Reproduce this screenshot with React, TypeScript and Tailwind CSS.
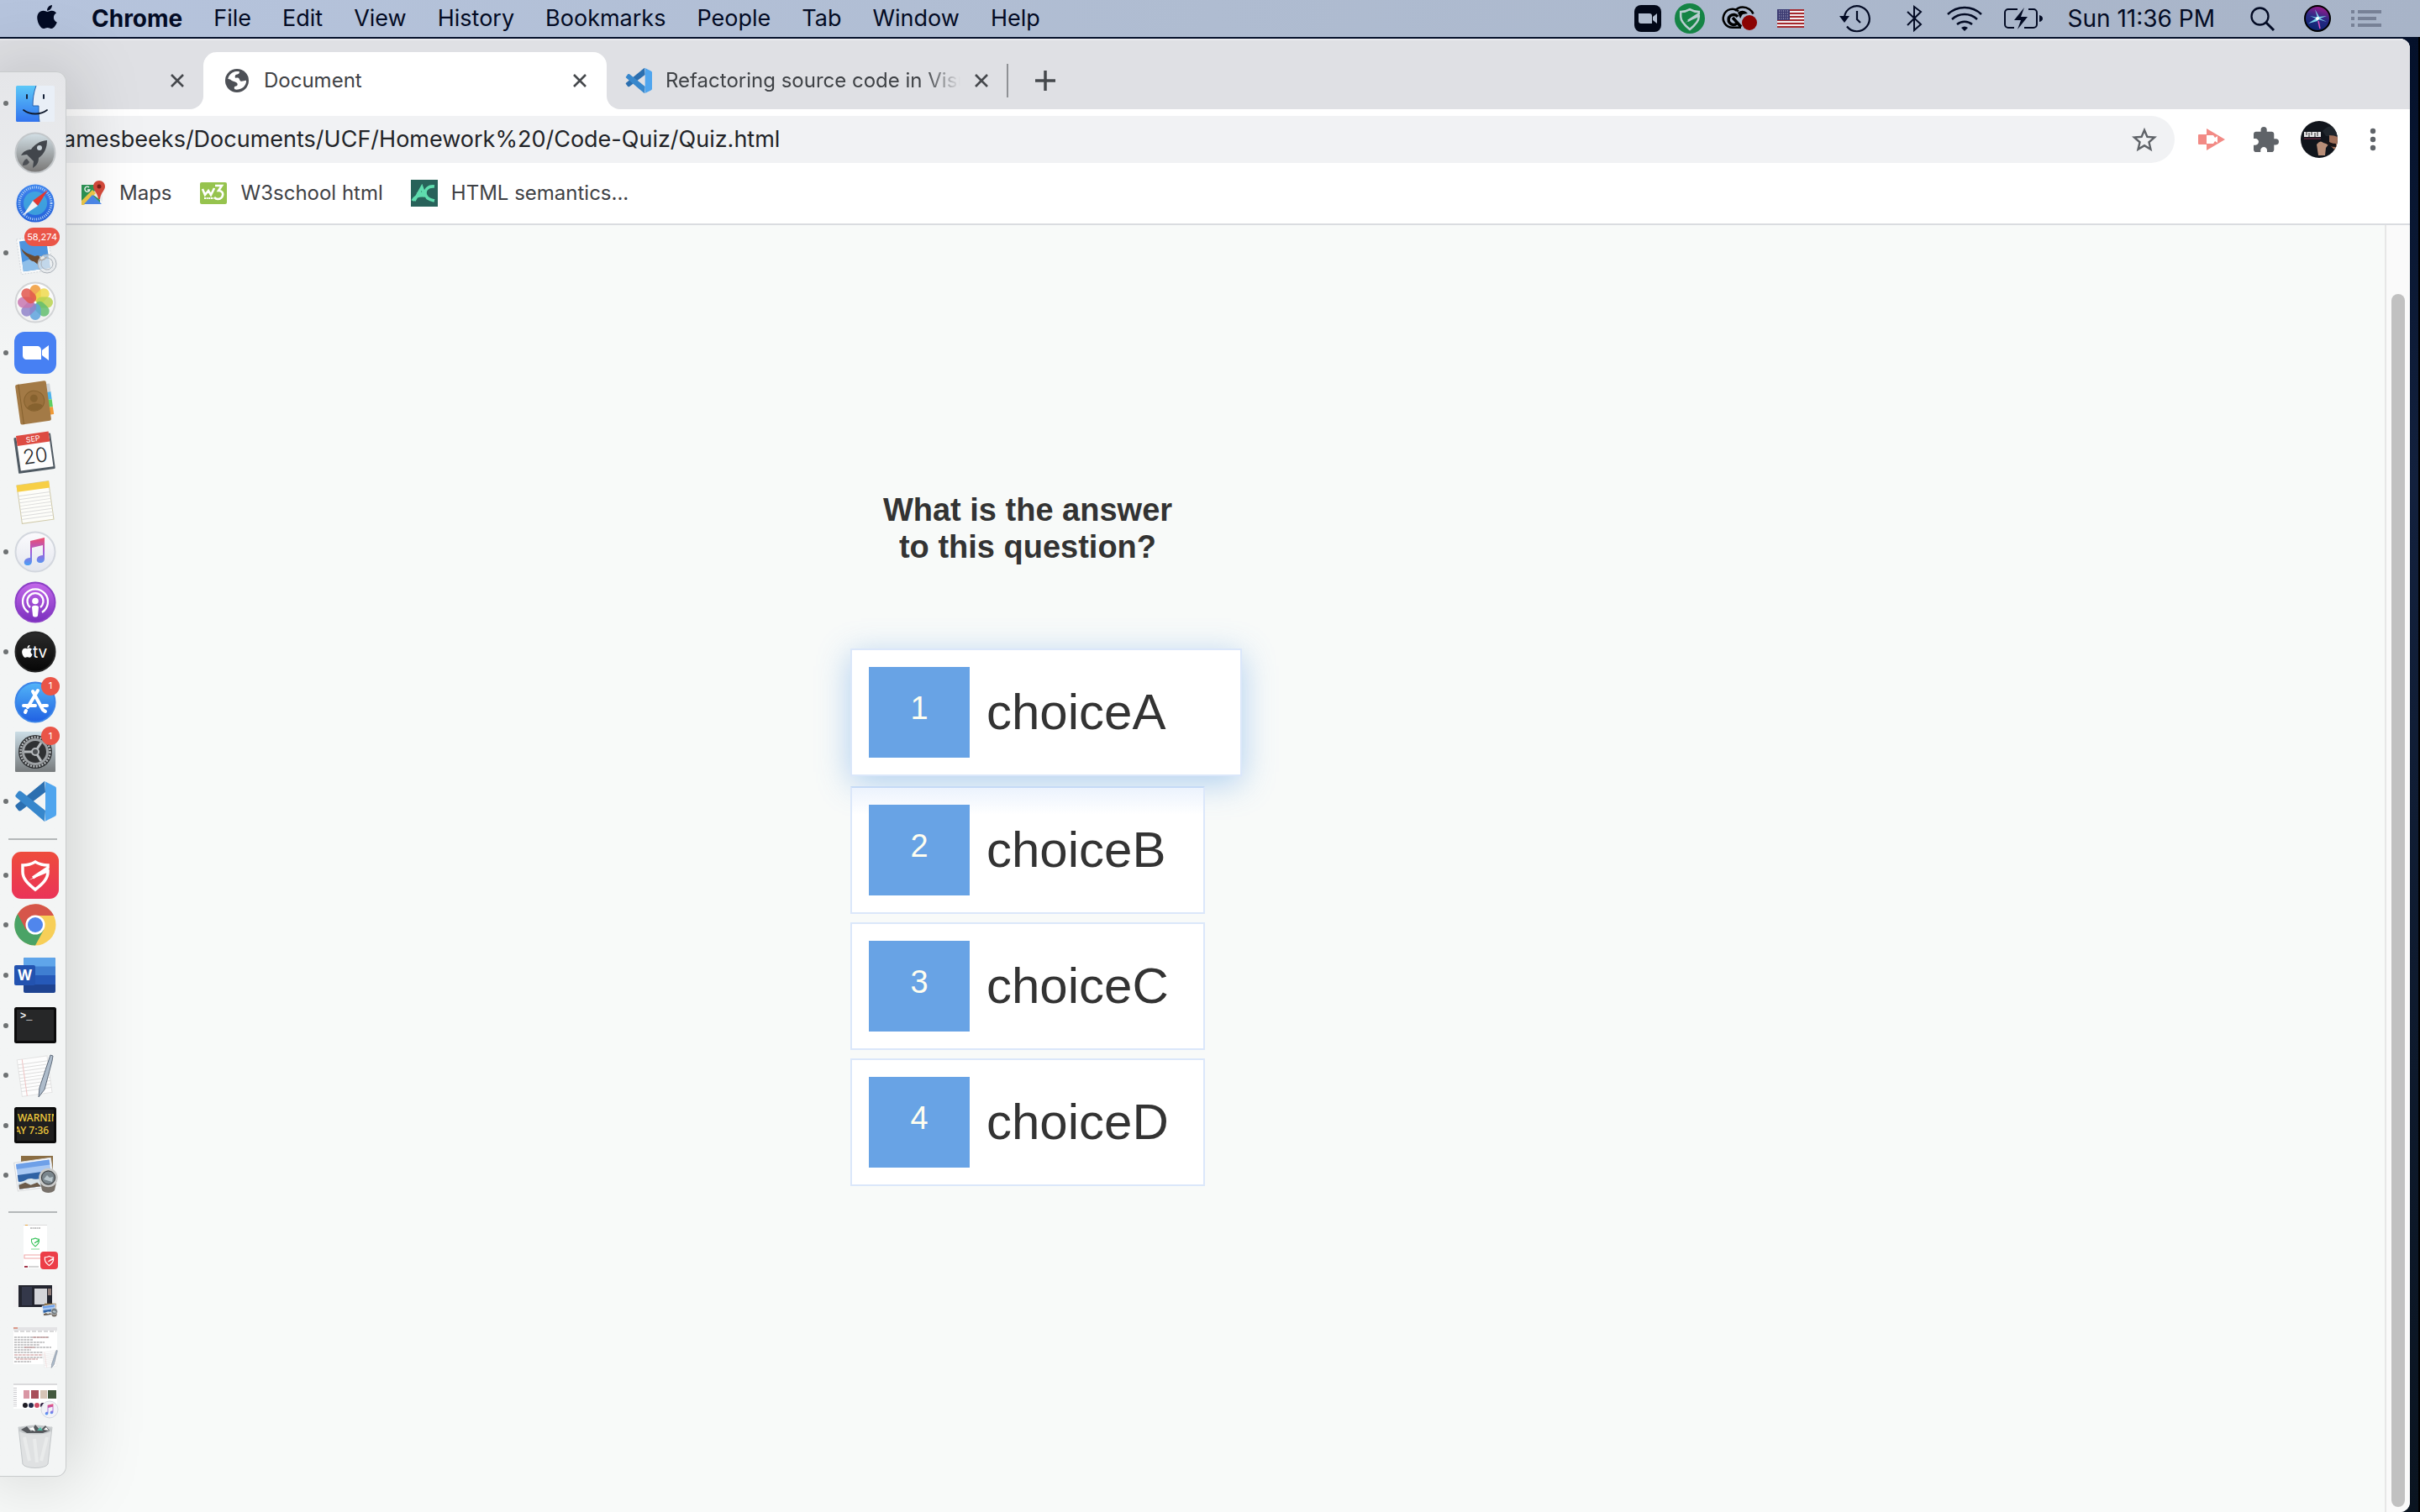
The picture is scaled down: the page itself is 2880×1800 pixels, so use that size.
import React from "react";
import { FaApple } from "react-icons/fa";

type Kids = { children?: React.ReactNode };

/* ---------- shared drawings ---------- */

function Svg({ w, h, vb, children }: Kids & { w: number; h: number; vb: string }) {
  return (
    <svg width={w} height={h} viewBox={vb} fill="none" aria-hidden="true" className="block shrink-0 overflow-visible">
      {children}
    </svg>
  );
}

const APPLE =
  "M318.7 268.7c-.2-36.7 16.4-64.4 50-84.8-18.8-26.9-47.2-41.7-84.7-44.6-35.5-2.8-74.3 20.7-88.5 20.7-15 0-49.4-19.7-76.4-19.7C63.3 141.2 4 184.8 4 273.5q0 39.300 14.400 81.200c12.800 36.700 59 126.700 107.200 125.200 25.200-.6 43-17.900 75.800-17.900 31.800 0 48.300 17.900 76.400 17.900 48.600-.7 90.400-82.500 102.600-119.300-65.200-30.700-61.700-90-61.700-91.900zm-56.600-164.200c27.300-32.400 24.800-61.900 24-72.500-24.100 1.400-52 16.400-67.900 34.900-17.500 19.800-27.800 44.300-25.600 71.900 26.100 2 49.900-11.400 69.500-34.300z";

function VsCodeMark({ size }: { size: number }) {
  return (
    <Svg w={size} h={size} vb="0 0 50 50">
      <path d="M36 1 2 29a2 2 0 0 0 0 3l3 4a3 3 0 0 0 3 0L37 14z" fill="#2b6fb0" />
      <path d="M36 49 2 20a2 2 0 0 1 0-3l3-4a3 3 0 0 1 3 0l29 23z" fill="#3787cc" />
      <path d="M36 1 48 7a3 3 0 0 1 2 3v30a3 3 0 0 1-2 3L36 49c1-1 1-2 1-3V4c0-1 0-2-1-3z" fill="#4fa5ee" />
    </Svg>
  );
}

function ShieldLines({ color }: { color: string }) {
  return (
    <>
      <path d="M40 19v3c0 8-6 14-15 21C16 36 10 30 10 22v-8c6 0 10-1 15-4 5 3 9 4 15 4v3L22 29" stroke={color} strokeWidth="3.500" />
      <path d="M17 32 41 18l-2 5z" fill={color} />
    </>
  );
}

function NoteGlyph() {
  return (
    <>
      <defs>
        <linearGradient id="note" x1="0" y1="0" x2="0" y2="1">
          <stop offset="0" stopColor="#ee4f6c" />
          <stop offset="0.5" stopColor="#a65ad8" />
          <stop offset="1" stopColor="#4aa0f5" />
        </linearGradient>
      </defs>
      <path
        d="M19 12 36 8v25c0 3-2 5-5 5s-5-2-4-5 4-4 7-4V17l-13 3v16c0 3-2 5-5 5s-5-2-4-5 4-4 7-4z"
        fill="url(#note)"
      />
    </>
  );
}

function CloseMark() {
  return (
    <Svg w={18} h={18} vb="0 0 18 18">
      <path d="M2 2 16 16M16 2 2 16" stroke="#45484c" strokeWidth="2.600" />
    </Svg>
  );
}

/* ---------- menu bar ---------- */

const MENUS = ["File", "Edit", "View", "History", "Bookmarks", "People", "Tab", "Window", "Help"];
const INK = "#030b24";

function MenuBar() {
  return (
    <header className="flex h-11 shrink-0 items-center bg-linear-to-r from-[#b6c4dd] via-[#afbcd1] to-[#a8b4c8] text-[27px] leading-8 text-[#030b24]">
      <nav aria-label="Menu" className="flex items-center gap-[37px] pl-10">
        <button aria-label="Apple menu" className="-mt-1">
          <FaApple size={32} color={INK} />
        </button>
        <button className="text-[28px] font-bold">Chrome</button>
        {MENUS.map((m) => (
          <button key={m}>{m}</button>
        ))}
      </nav>
      <div className="ml-auto flex items-center pr-[46px]">
        <button aria-label="Zoom">
          <Svg w={32} h={32} vb="0 0 32 32">
            <rect width="32" height="32" rx="8" fill="#020818" />
            <path d="M5 10h13c2 0 3 1 3 3v9H8c-2 0-3-1-3-3zM22 14l5-4v12l-5-4z" fill="#b0bccf" />
          </Svg>
        </button>
        <button aria-label="VPN" className="ml-4">
          <Svg w={36} h={36} vb="0 0 50 50">
            <circle cx="25" cy="25" r="25" fill="#158445" />
            <ShieldLines color="#b9cdd0" />
          </Svg>
        </button>
        <button aria-label="Creative Cloud" className="ml-[21px]">
          <Svg w={42} h={30} vb="0 0 42 30">
            <path d="M15 6C17 3 20 1.500 24 1.500c6 0 11 4 12.500 8" stroke="#000" strokeWidth="2.500" />
            <path d="M22 25.800H12A11 11 0 1 1 19 6.500" stroke="#000" strokeWidth="2.500" />
            <path d="M18 13a6 6 0 1 0-1 8M12 14l10 11" stroke="#000" strokeWidth="3.500" />
            <path d="M18 8c4-3 8-3 12 1l-6 1c-2 2-2 4-3 5z" fill="#000" />
            <circle cx="32" cy="20" r="9" fill="#8b0303" />
          </Svg>
        </button>
        <button aria-label="Input source: U.S." className="ml-[23px]">
          <Svg w={32} h={22} vb="0 0 32 22">
            <rect width="32" height="22" fill="#f3eef0" />
            {[0, 4, 8, 12, 16, 20].map((y) => (
              <rect key={y} y={y} width="32" height="2" fill="#a5282d" />
            ))}
            <rect width="15" height="13" fill="#3c3b72" />
            {[2, 5, 8, 11].map((y) => (
              <path key={y} d={`M2 ${y}h12`} stroke="#c5c6dc" strokeDasharray="1 1.500" />
            ))}
          </Svg>
        </button>
        <button aria-label="Time Machine" className="ml-[42px]">
          <Svg w={37} h={32} vb="0 0 37 32">
            <path d="M6 14A15 15 0 1 1 9 25.500" stroke={INK} strokeWidth="2.200" />
            <path d="M0 13h12L6 21z" fill={INK} />
            <path d="M21 7v10l4 4" stroke={INK} strokeWidth="2.200" />
          </Svg>
        </button>
        <button aria-label="Bluetooth" className="ml-[43px]">
          <Svg w={18} h={32} vb="0 0 18 32">
            <path d="M1 8 17 23 9 30V2l8 6L1 24" stroke={INK} strokeWidth="2" />
          </Svg>
        </button>
        <button aria-label="Wi-Fi" className="ml-[30px]">
          <Svg w={42} h={30} vb="0 0 42 30">
            <path d="M1 10a29 29 0 0 1 40 0M6 16a22 22 0 0 1 30 0M12 22a14 14 0 0 1 18 0" stroke={INK} strokeWidth="2.500" />
            <path d="M17 26q4-3 8 0l-4 4z" fill={INK} />
          </Svg>
        </button>
        <button aria-label="Battery charging" className="ml-[26px]">
          <Svg w={46} h={26} vb="0 0 46 26">
            <path d="M16 2H5a4 4 0 0 0-4 4v14a4 4 0 0 0 4 4h7M29 2h6a4 4 0 0 1 4 4v14a4 4 0 0 1-4 4H24" stroke={INK} strokeWidth="2" />
            <path d="M24 0 12 15h8l-4 11 12-15h-8zM42 9q4 1 4 4t-4 4z" fill={INK} />
          </Svg>
        </button>
        <time className="ml-[30px] text-[28px]">Sun 11:36 PM</time>
        <button aria-label="Spotlight" className="ml-[42px]">
          <Svg w={29} h={29} vb="0 0 29 29">
            <circle cx="11.500" cy="11.500" r="10" stroke={INK} strokeWidth="2.300" />
            <path d="M18.500 18.500 28 28" stroke={INK} strokeWidth="3" />
          </Svg>
        </button>
        <button aria-label="Siri" className="ml-[35px]">
          <Svg w={32} h={32} vb="0 0 32 32">
            <defs>
              <linearGradient id="siri" x1="0.600" y1="0" x2="0.300" y2="1">
                <stop offset="0" stopColor="#a0188c" />
                <stop offset="0.450" stopColor="#2a2a86" />
                <stop offset="1" stopColor="#07246e" />
              </linearGradient>
            </defs>
            <circle cx="16" cy="16" r="15" fill="url(#siri)" stroke="#000" strokeWidth="2" />
            <path d="M16 15 13 5l5 9 9-1-8 3 8 4-10-3-1 2-11 3 9-6-7-3z" fill="#7fd8ee" />
            <circle cx="16" cy="16" r="2" fill="#fff" />
            <path d="m17 19 2 9" stroke="#e056c0" strokeWidth="1.500" />
          </Svg>
        </button>
        <button aria-label="Notification Center" className="ml-6">
          <Svg w={36} h={20} vb="0 0 36 20">
            <path d="M0 2h4M8 2h28M0 10h4M8 10h22M0 18h4M8 18h28" stroke="#778196" strokeWidth="4" />
          </Svg>
        </button>
      </div>
    </header>
  );
}

/* ---------- browser chrome ---------- */

function TabStrip() {
  return (
    <div role="tablist" className="flex h-[84px] shrink-0 bg-white text-[24px] text-[#3f4246]">
      <div className="flex w-[242px] items-center justify-end rounded-br-[16px] border-t-2 border-[#ececef] bg-[#dfe0e4] pt-3.5 pr-[22px]">
        <button aria-label="Close tab">
          <CloseMark />
        </button>
      </div>
      <div className="flex w-[480px] border-t-2 border-[#ececef] bg-[#dfe0e4] pt-3.5">
        <div role="tab" aria-selected="true" className="flex flex-1 items-center rounded-t-[16px] bg-white pr-[23px] pl-[26px]">
          <Svg w={28} h={28} vb="2 2 20 20">
            <circle cx="12" cy="12" r="10" fill="#4d5056" />
            <path
              d="M4.400 10.600C4.700 8.500 6.500 5.500 10.100 4.400c1.200-.3 2.600-.4 3.700-.2.500.8.200 1.700-.6 2.100-.9.500-2.400.3-2.600 1.200-.3.900-.5 1.900.2 2.100.8.100 1.900-.2 2.600.2.900.6.800 2.300 1.900 2.700 1.400.4 2.700-.4 4.500-.6.200 1.200-.1 2.600-.9 3.800-.8 1.300-1.800 2.300-3.100 2.900-1.600.8-3.900 1.300-5.700.8-.5-.7-.6-1.800 0-2.400.6-.5 1.700-.2 2.100-.9.400-.6.300-1.300 0-1.800-.5-.8-1.300-1-2.100-1.400-.8-.3-1.700-.5-2.400-.9-.9-.4-1.300-1.300-3.300-1.400z"
              fill="#fff"
            />
          </Svg>
          <span className="ml-[18px]">Document</span>
          <button aria-label="Close tab" className="ml-auto">
            <CloseMark />
          </button>
        </div>
      </div>
      <div className="flex flex-1 items-center rounded-bl-[16px] border-t-2 border-[#ececef] bg-[#dfe0e4] pt-3.5 pl-[22px]">
        <div role="tab" aria-selected="false" className="flex w-[433px] items-center">
          <VsCodeMark size={32} />
          <span className="ml-4 min-w-0 flex-1 overflow-hidden [mask-image:linear-gradient(to_right,#000_88%,transparent)] whitespace-nowrap">
            Refactoring source code in Visu
          </span>
          <button aria-label="Close tab" className="ml-4">
            <CloseMark />
          </button>
        </div>
        <span className="ml-[21px] h-10 w-0.5 bg-[#8f9195]" />
        <button aria-label="New tab" className="ml-8">
          <Svg w={24} h={24} vb="0 0 24 24">
            <path d="M12 0v24M0 12h24" stroke="#45484c" strokeWidth="3.500" />
          </Svg>
        </button>
      </div>
    </div>
  );
}

function Toolbar() {
  return (
    <div className="flex h-[72px] shrink-0 items-center bg-white pr-10">
      <div className="flex h-14 flex-1 items-center rounded-r-full bg-[#f1f2f4] pr-[21px] pl-[75px]">
        <input
          aria-label="Address"
          defaultValue="amesbeeks/Documents/UCF/Homework%20/Code-Quiz/Quiz.html"
          className="min-w-0 flex-1 bg-transparent text-[27px] text-[#222428] outline-none"
        />
        <button aria-label="Bookmark this page">
          <Svg w={30} h={30} vb="2 1.500 20 20">
            <path
              d="m22 9.240-7.190-.62L12 2 9.190 8.630 2 9.240l5.460 4.730L5.820 21 12 17.270 18.180 21l-1.630-7.030L22 9.240zM12 15.400l-3.760 2.270 1-4.280-3.320-2.880 4.380-.38L12 6.100l1.710 4.040 4.380.38-3.320 2.880 1 4.280L12 15.400z"
              fill="#5f6368"
            />
          </Svg>
        </button>
      </div>
      <button aria-label="Screen recorder" className="ml-7">
        <Svg w={32} h={26} vb="0 0 32 26">
          <path d="M10 0 32 13 10 26v-7H1a1 1 0 0 1-1-1V8a1 1 0 0 1 1-1h9z" fill="#f28a85" />
          <path d="M10 8h8l2 3 3-2v8l-3-2-2 3h-8z" fill="#fff" />
        </Svg>
      </button>
      <button aria-label="Extensions" className="ml-[34px]">
        <Svg w={30} h={30} vb="2 1 21 21">
          <path
            d="M20.500 11H19V7c0-1.100-.9-2-2-2h-4V3.500a2.500 2.500 0 0 0-5 0V5H4c-1.100 0-1.990.9-1.990 2v3.800H3.500c1.490 0 2.700 1.210 2.700 2.700s-1.210 2.700-2.700 2.700H2V20c0 1.100.9 2 2 2h3.800v-1.500c0-1.490 1.210-2.700 2.700-2.700s2.700 1.210 2.700 2.700V22H17c1.100 0 2-.9 2-2v-4h1.500a2.500 2.500 0 0 0 0-5z"
            fill="#5f6368"
          />
        </Svg>
      </button>
      <button aria-label="Profile" className="ml-[26px]">
        <Svg w={44} h={44} vb="0 0 44 44">
          <defs>
            <clipPath id="face">
              <circle cx="22" cy="22" r="22" />
            </clipPath>
          </defs>
          <g clipPath="url(#face)">
            <rect width="44" height="44" fill="#11151c" />
            <path d="M26 12q8-10 18-2v8H30z" fill="#1f252c" />
            <path d="M34 17q6 0 10 2v13l-4 2-6-6z" fill="#a1705a" />
            <path d="M19 28q4-6 8-2l6 2-3 4-1 9h-8z" fill="#b88e78" />
            <path d="M30 22q5 5 12 5v4q-9 0-13-6z" fill="#1a1416" />
            <rect x="4" y="13" width="20" height="6" fill="#e8e8ea" />
            <path d="M7 13v4M10 14v5M13 13v4M17 14v5M20 13v5" stroke="#222" />
            <path d="M4 21h20" stroke="#7a2c46" />
          </g>
        </Svg>
      </button>
      <button aria-label="Chrome menu" className="ml-[38px]">
        <Svg w={8} h={28} vb="0 0 8 28">
          <circle cx="4" cy="4" r="3.200" fill="#5f6368" />
          <circle cx="4" cy="14" r="3.200" fill="#5f6368" />
          <circle cx="4" cy="24" r="3.200" fill="#5f6368" />
        </Svg>
      </button>
    </div>
  );
}

function BookmarksBar() {
  return (
    <nav
      aria-label="Bookmarks"
      className="flex h-[66px] shrink-0 items-center border-b-2 border-[#dadce0] bg-white pb-2 pl-24 text-[24px] text-[#3f4246]"
    >
      <a href="#maps" className="flex items-center gap-4">
        <Svg w={30} h={30} vb="0 0 30 30">
          <path d="M1 5h22v22H1z" fill="#2f9a58" />
          <path d="M1 28 22 7l4 4v14L15 17 4 29z" fill="#f2f3f5" />
          <path d="M1 24 14 11l4 4L4 29H1z" fill="#f6cf4b" />
          <path d="m14 17 11 11H4z" fill="#4f8cf0" />
          <path d="M22 0c4 0 7 3 7 7 0 5-5 7-6 15h-2C20 14 15 12 15 7c0-4 3-7 7-7z" fill="#d84b3c" />
          <circle cx="22" cy="7" r="2.500" fill="#7d2018" />
          <path d="M10 8a3 3 0 1 0 .8 3H8" stroke="#fff" strokeWidth="1.400" />
        </Svg>
        Maps
      </a>
      <a href="#w3" className="ml-[33px] flex items-center gap-[17px]">
        <Svg w={32} h={26} vb="0 0 32 26">
          <rect width="32" height="26" rx="2" fill="#96c34e" />
          <path d="m3 8 3 7 4-5 3 5 4-8M18 4h8l-4 6c8 0 6 10-1 10-2 0-3-1-4-2" stroke="#fff" strokeWidth="2.600" />
          <path d="M5 19h11" stroke="#fff" strokeWidth="2" strokeDasharray="2 .6" />
        </Svg>
        W3school html
      </a>
      <a href="#html" className="ml-[33px] flex items-center gap-4">
        <Svg w={32} h={32} vb="0 0 32 32">
          <rect width="32" height="32" fill="#28625a" />
          <path d="m4 25 9-16 3 8M7 17l7-1M28 8c-8-1-13 5-10 11 2 5 6 5 10 6M2 25c3-6 8-7 15-6" stroke="#5fdcae" strokeWidth="3.500" />
        </Svg>
        HTML semantics...
      </a>
    </nav>
  );
}

/* ---------- quiz page ---------- */

const BASE = "flex items-center border-2 p-5 text-left";
const CHOICES = [
  { n: 1, label: "choiceA", cls: "mb-3 w-[466px] border-[#dbe7fa] bg-white shadow-[0_8px_36px_rgba(86,155,228,0.45)]" },
  {
    n: 2,
    label: "choiceB",
    cls: "relative mb-2.5 w-[422px] border-[#dbe7fa] border-t-[#c5daf6] bg-linear-to-b from-[#ecf3fd] to-white to-[32px]",
  },
  { n: 3, label: "choiceC", cls: "mb-2.5 w-[422px] border-[#dbe7fa] bg-white" },
  { n: 4, label: "choiceD", cls: "w-[422px] border-[#dbe7fa] bg-white" },
];

function Quiz() {
  return (
    <main className="grid min-h-0 flex-1 grid-cols-[1012fr_1826fr] bg-[#f8faf9] font-['Liberation_Sans',sans-serif] text-[#333]">
      <section className="col-start-2 flex flex-col items-start pt-[317px]">
        <h1 className="mb-[99px] w-[422px] px-8 text-center text-[38px] leading-[44px] font-bold">
          What is the answer to this question?
        </h1>
        {CHOICES.map((c) => (
          <button key={c.n} className={`${BASE} ${c.cls}`}>
            <span className="h-[108px] w-[120px] bg-[#68a3e5] pt-[27px] text-center text-[38px] leading-[44px] text-[#fffef0]">{c.n}</span>
            <span className="pl-5 text-[60px] leading-[68px]">{c.label}</span>
          </button>
        ))}
      </section>
    </main>
  );
}

/* ---------- dock ---------- */

type Item = { name: string; dot?: boolean; badge?: string; art: React.ReactNode };

function Disc({ id, a, b, rim, children }: Kids & { id: string; a: string; b: string; rim: string }) {
  return (
    <>
      <defs>
        <linearGradient id={id} x1="0" y1="0" x2="0" y2="1">
          <stop offset="0" stopColor={a} />
          <stop offset="1" stopColor={b} />
        </linearGradient>
      </defs>
      <circle cx="25" cy="25" r="23.500" fill={`url(#${id})`} stroke={rim} strokeWidth="2" />
      {children}
    </>
  );
}

const PETALS = ["#f09a37", "#eed94c", "#b9d24f", "#63bd6e", "#5ea3dd", "#8f83c9", "#c877b0", "#e2574c"];

const APPS: Item[] = [
  {
    name: "Finder",
    dot: true,
    art: (
      <>
        <defs>
          <linearGradient id="fin" x1="0" y1="0" x2="0" y2="1">
            <stop offset="0" stopColor="#5cc8f8" />
            <stop offset="1" stopColor="#3273ee" />
          </linearGradient>
        </defs>
        <rect x="2" y="4" width="46" height="43" rx="1.500" fill="#e9eff7" />
        <path d="M2 5.500A1.500 1.500 0 0 1 3.500 4H26c-3 8-4 16-4 24h7c0 7 0 13 1 19H3.500A1.500 1.500 0 0 1 2 45.500z" fill="url(#fin)" />
        <path d="M15 15v4M35 15v4" stroke="#152238" strokeWidth="2" strokeLinecap="round" />
        <path d="M26 4c-3 8-4 16-4 24h7c0 7 0 13 1 19" stroke="#2b63ad" />
        <path d="M11 33c8 6 20 6 28 0" stroke="#101a2c" strokeWidth="1.800" strokeLinecap="round" />
      </>
    ),
  },
  {
    name: "Launchpad",
    art: (
      <Disc id="lp" a="#d3e0e6" b="#777574" rim="#c3c7ca">
        <path d="M39 10c-9 1-15 5-19 11-5 0-9 2-12 7l7-1 8 8-1 8c5-3 7-7 7-12 7-5 10-12 10-21z" fill="#42464c" />
        <circle cx="30" cy="19" r="3" fill="#c8d2d8" />
        <path d="M10 40c0-4 2-7 5-8l3 4c-2 3-4 4-8 4z" fill="#4c4f54" />
      </Disc>
    ),
  },
  {
    name: "Safari",
    art: (
      <Disc id="saf" a="#3f86ee" b="#235fd8" rim="#e8ebf0">
        <circle cx="25" cy="25" r="14" fill="#45b3dc" opacity=".7" />
        <circle cx="25" cy="25" r="19" stroke="#b9d5f6" strokeWidth="3" strokeDasharray="1 1.500" />
        <path d="m40 9-18 13 6 6z" fill="#e4372f" />
        <path d="m10 40 12-18 6 6z" fill="#f1f1f2" />
      </Disc>
    ),
  },
  {
    name: "Mail",
    dot: true,
    badge: "58,274",
    art: (
      <>
        <g transform="rotate(-8 25 25)">
          <rect x="5" y="6" width="38" height="42" fill="#f8f9fa" stroke="#d3d7db" strokeDasharray="2 1.500" />
          <rect x="8" y="9" width="32" height="36" fill="#4d93dd" />
          <path d="M8 34q16-6 32 0v11H8z" fill="#8fbfe9" />
          <path d="M9 17c5 8 10 9 15 12 3-1 5 0 7 2 3 1 6 1 8 0-3 4-6 5-10 4l-3 4-4-4c-3-1-5-3-6-6-4-3-6-7-7-12z" fill="#6b4a30" />
          <path d="m29 30 5 0 2 3-5 1z" fill="#f1ede4" />
        </g>
        <circle cx="39" cy="38" r="11" fill="#e5e8eb" opacity=".6" />
        <circle cx="39" cy="38" r="11" stroke="#a9b0b7" />
        <circle cx="39" cy="38" r="7" stroke="#a9b0b7" />
      </>
    ),
  },
  {
    name: "Photos",
    art: (
      <Disc id="ph" a="#ffffff" b="#f0f0f1" rim="#d2d4d6">
        {PETALS.map((c, i) => (
          <rect key={c} x="18.500" y="4" width="13" height="20" rx="6.500" fill={c} opacity=".85" transform={`rotate(${i * 45} 25 25)`} />
        ))}
        <circle cx="25" cy="25" r="1.500" fill="#fff" />
      </Disc>
    ),
  },
  {
    name: "Zoom",
    dot: true,
    art: (
      <>
        <rect width="50" height="50" rx="12" fill="#4780f3" />
        <path d="M10 17h17c3 0 5 2 5 5v11H15c-3 0-5-2-5-5zM33 22l8-6v18l-8-6z" fill="#fff" />
      </>
    ),
  },
  {
    name: "Contacts",
    art: (
      <g transform="rotate(-8 25 25)">
        <path d="M40 5h5v11h-5z" fill="#cfd3d6" />
        <path d="M40 15h5v9h-5z" fill="#4fb3ea" />
        <path d="M40 24h5v9h-5z" fill="#5fcf62" />
        <path d="M40 33h5v9h-5z" fill="#f09a37" />
        <rect x="4" y="1" width="37" height="48" rx="2" fill="#a37a46" />
        <path d="M8 1v48" stroke="#86622f" />
        <circle cx="24" cy="23" r="12" fill="#9a713d" stroke="#86622f" />
        <circle cx="24" cy="20" r="4.500" fill="#86622f" />
        <path d="M15 30c2-5 16-5 18 0-4 6-14 6-18 0z" fill="#86622f" />
      </g>
    ),
  },
  {
    name: "Calendar",
    art: (
      <g transform="rotate(-8 25 25)">
        <rect x="2" y="4" width="44" height="43" rx="1" fill="#4f5a63" />
        <rect x="5" y="2" width="39" height="42" fill="#fdfdfd" />
        <path d="M5 2h39v12H5z" fill="#dd4b42" />
        <text x="24.500" y="11.500" textAnchor="middle" fontSize="9" fill="#fff" fontFamily="Inter">SEP</text>
        <text x="24.500" y="37" textAnchor="middle" fontSize="24" fontWeight="300" fill="#26282b" fontFamily="Inter">20</text>
      </g>
    ),
  },
  {
    name: "Notes",
    art: (
      <g transform="rotate(-8 25 25)">
        <rect x="6" y="2" width="38" height="46" fill="#fdfdf9" stroke="#cfc9a8" />
        <path d="M5.500 2h39v8h-39z" fill="#f7cf46" />
        <path d="M6 15h38M6 19h38M6 23h38M6 27h38M6 31h38M6 35h38M6 39h38M6 43h38" stroke="#dcdcdc" />
      </g>
    ),
  },
  { name: "Music", dot: true, art: <Disc id="mu" a="#fbfbfd" b="#e3e6ee" rim="#d3d7de"><NoteGlyph /></Disc> },
  {
    name: "Podcasts",
    art: (
      <Disc id="pod" a="#c468ea" b="#7a2fbe" rim="#8b3fc6">
        <path d="M17 37a15 15 0 1 1 16 0M19 31a9.500 9.500 0 1 1 12 0" stroke="#fff" strokeWidth="2.300" />
        <circle cx="25" cy="23.500" r="3.800" fill="#fff" />
        <path d="M21 31c0-3 8-3 8 0l-1 10c-1 2-5 2-6 0z" fill="#fff" />
      </Disc>
    ),
  },
  {
    name: "TV",
    dot: true,
    art: (
      <Disc id="tv" a="#2b2b2b" b="#060606" rim="#242424">
        <path d={APPLE} fill="#fff" transform="translate(9 16) scale(.033)" />
        <text x="22" y="32" fontSize="19" fill="#fff" fontFamily="Inter">tv</text>
      </Disc>
    ),
  },
  {
    name: "App Store",
    badge: "1",
    art: (
      <Disc id="as" a="#52b5f8" b="#2060e2" rim="#3b84e8">
        <path d="M22 12 34 34M28 11 16 31M11 29h14M34 29h5M14 35l-1 2M34 34l3 2" stroke="#fff" strokeWidth="4" strokeLinecap="round" />
      </Disc>
    ),
  },
  {
    name: "System Preferences",
    badge: "1",
    art: (
      <>
        <defs>
          <linearGradient id="pref" x1="0" y1="0" x2="0" y2="1">
            <stop offset="0" stopColor="#cbdde6" />
            <stop offset="1" stopColor="#777b7d" />
          </linearGradient>
        </defs>
        <rect x="1" y="1" width="48" height="48" rx="1" fill="url(#pref)" />
        <circle cx="25" cy="25" r="20" fill="#2f3133" />
        <circle cx="25" cy="25" r="17.500" stroke="#b6babd" strokeWidth="2.500" strokeDasharray="2 1.500" />
        <circle cx="25" cy="25" r="14.500" stroke="#9da1a4" strokeWidth="3" />
        <path d="M25 25H12M25 25l7-11M25 25l7 11" stroke="#b6babd" strokeWidth="3" />
        <circle cx="25" cy="25" r="4" fill="#4a4d50" stroke="#b6babd" strokeWidth="2" />
      </>
    ),
  },
  { name: "Visual Studio Code", dot: true, art: <VsCodeMark size={50} /> },
];

const TextEditArt = (
  <>
    <g transform="rotate(-8 25 25)">
      <rect x="6" y="4" width="36" height="44" fill="#fdfdfd" stroke="#e3e3e3" />
      <path d="M6 10h36M6 14h36M6 18h36M6 22h36M6 26h36M6 30h36M6 34h36M6 38h36M6 42h36" stroke="#dedede" />
      <path d="M12 4v44" stroke="#f0c4c4" />
    </g>
    <path d="m43 1 3 1-1 6-9 34-7 9 1-11z" fill="#aebccb" stroke="#5f6b7b" />
  </>
);

const PreviewArt = (
  <>
    <rect x="8" y="2" width="38" height="22" fill="#8a6d42" />
    <g transform="rotate(-8 25 25)">
      <rect x="2" y="7" width="44" height="34" fill="#fafafa" stroke="#d5d7d9" />
      <rect x="4" y="9" width="40" height="30" fill="#a8c8f3" />
      <path d="M4 9h40v6H4z" fill="#6ea0e8" />
      <path d="M4 22h40v17H4z" fill="#2f62a4" />
      <path d="M4 30c8 2 10-4 18-1s12-1 22-1v11H4z" fill="#dbe5ea" />
      <path d="m4 34 8-2 6 4 8-2 4 5H4z" fill="#6b5a48" />
    </g>
    <path d="M30 29h21l-3 14c-3 4-12 4-15 0z" fill="#77716a" />
    <circle cx="40.500" cy="28" r="10" fill="#79858c" stroke="#c9cac9" strokeWidth="2.500" />
    <circle cx="40.500" cy="28" r="8" stroke="#3b3b3b" />
    <path d="m35 30 4-5 3 3 4-1-1 6z" fill="#b9c6cc" />
  </>
);

const RUNNING: Item[] = [
  {
    name: "VPN",
    dot: true,
    art: (
      <>
        <defs>
          <linearGradient id="vpn" x1="0" y1="0" x2="0" y2="1">
            <stop offset="0" stopColor="#ee4c3c" />
            <stop offset="1" stopColor="#ea3358" />
          </linearGradient>
        </defs>
        <rect x="-3" y="-3" width="56" height="56" rx="11" fill="url(#vpn)" />
        <g transform="translate(0 -1)">
          <ShieldLines color="#fff" />
        </g>
      </>
    ),
  },
  {
    name: "Chrome",
    dot: true,
    art: (
      <>
        <circle cx="25" cy="25" r="24.500" fill="#f7cf58" />
        <path d="M25 25 4 12A24.500 24.500 0 0 0 25 49.500L35 31z" fill="#4aa366" />
        <path d="M4 12a24.500 24.500 0 0 1 43 2H25L14 31z" fill="#d6564a" />
        <circle cx="25" cy="25" r="11.500" fill="#fff" />
        <circle cx="25" cy="25" r="9" fill="#5086ec" />
      </>
    ),
  },
  {
    name: "Word",
    dot: true,
    art: (
      <>
        <rect x="11" y="4" width="38" height="42" rx="2" fill="#1e4391" />
        <path d="M11 25h38v11H11z" fill="#2659b8" />
        <path d="M11 14h38v11H11z" fill="#3f7ed1" />
        <path d="M13 4h34a2 2 0 0 1 2 2v8.500H11V6a2 2 0 0 1 2-2z" fill="#5fa5ea" />
        <rect y="13" width="25" height="24" rx="2" fill="#2353b0" />
        <text x="12.500" y="31" textAnchor="middle" fontSize="17" fontWeight="700" fill="#fff" fontFamily="Inter">W</text>
      </>
    ),
  },
  {
    name: "Terminal",
    dot: true,
    art: (
      <>
        <rect x="1.500" y="4.500" width="47" height="40" rx="1" fill="#262728" stroke="#0b0b0b" strokeWidth="3" />
        <text x="7" y="17" fontSize="12" fontWeight="700" fill="#f2f2f2" fontFamily="Liberation Mono">&gt;_</text>
      </>
    ),
  },
  { name: "TextEdit", dot: true, art: TextEditArt },
  {
    name: "Console",
    dot: true,
    art: (
      <>
        <rect x="1.500" y="4.500" width="47" height="40" rx="1" fill="#1f1f1f" stroke="#0b0b0b" strokeWidth="3" />
        <svg x="3" y="6" width="44" height="37" overflow="hidden">
          <text x="1" y="14" fontSize="12" fontWeight="500" fill="#f0cb3c" fontFamily="Noto Sans">WARNIN</text>
          <text x="-3" y="29" fontSize="12" fontWeight="500" fill="#f0cb3c" fontFamily="Noto Sans">AY 7:36</text>
        </svg>
      </>
    ),
  },
  { name: "Preview", dot: true, art: PreviewArt },
];

const MINIMIZED: Item[] = [
  {
    name: "VPN window",
    art: (
      <>
        <rect x="11" y="0" width="28" height="52" fill="#fff" />
        <path d="M11 .5h28" stroke="#dcdcdc" />
        <path d="M19 4h12" stroke="#8e8e8e" strokeDasharray="2 .5" />
        <path d="M13 .5h3" stroke="#e9a33b" />
        <g transform="translate(17.500 13) scale(.3)">
          <ShieldLines color="#35c258" />
        </g>
        <path d="M20 29h10" stroke="#7fd694" />
        <rect x="12" y="36" width="25" height="4" stroke="#f0a5a5" />
        <path d="M12 50h4" stroke="#a0364a" strokeWidth="2" />
        <path d="M17 50h12" stroke="#aaa" />
        <rect x="31" y="32" width="21" height="21" rx="4" fill="#ec3e48" />
        <g transform="translate(33 34) scale(.34)">
          <ShieldLines color="#fff" />
        </g>
      </>
    ),
  },
  {
    name: "Screenshot window",
    art: (
      <>
        <rect x="-1" y="12" width="52" height="26" fill="#f2f2f3" />
        <rect x="5" y="12" width="40" height="26" fill="#23252f" />
        <rect x="9" y="14" width="12" height="22" fill="#34384a" />
        <rect x="24" y="16" width="15" height="19" fill="#d4d5d9" />
        <path d="M40 16h4v8h-4z" fill="#8f7c78" />
        <g transform="translate(33 33) scale(.36)">{PreviewArt}</g>
      </>
    ),
  },
  {
    name: "Text window",
    art: (
      <>
        <rect x="-1" y="3" width="52" height="44" fill="#fff" />
        <path d="M-1 5h52" stroke="#e3e3e5" strokeWidth="4" />
        <path d="M-1 4h5" stroke="#d9826b" strokeWidth="1.500" />
        <path d="M0 8h50" stroke="#b3b3b6" strokeDasharray="5 2" />
        <path d="M0 15h42M0 18h22M0 21h36M0 24h30M0 27h44M0 30h20M0 33h34M0 39h36M0 44h20" stroke="#8f8f92" strokeDasharray="3 .8" />
        <path d="M22 15h18M12 27h12M0 36h42M2 41h26" stroke="#c38a8a" strokeDasharray="4 .8" />
        <g transform="translate(32 30) scale(.42)">{TextEditArt}</g>
      </>
    ),
  },
  {
    name: "Music window",
    art: (
      <>
        <rect x="-1" y="10" width="52" height="30" fill="#fff" />
        <path d="M-1 11h52" stroke="#dadadc" strokeWidth="2" />
        <path d="M1 15v23" stroke="#c8c8cc" strokeWidth="4" strokeDasharray="1 1.500" />
        <rect x="11" y="18" width="7" height="10" fill="#d996a4" />
        <rect x="20" y="18" width="9" height="10" fill="#a8505a" />
        <rect x="31" y="18" width="8" height="10" fill="#d7c4b6" />
        <rect x="40" y="18" width="10" height="10" fill="#43583e" />
        <circle cx="13" cy="36" r="3" fill="#1e1c24" />
        <circle cx="20" cy="36" r="3" fill="#252b4a" />
        <circle cx="27" cy="36" r="3" fill="#cf4c66" />
        <circle cx="34" cy="36" r="3" fill="#2b1b3b" />
        <circle cx="42" cy="41" r="10" fill="#f1f2f7" stroke="#d5d8e0" />
        <g transform="translate(32 31) scale(.4)">
          <NoteGlyph />
        </g>
      </>
    ),
  },
  {
    name: "Trash",
    art: (
      <>
        <path d="M5 2h40l-5 44c-3 6-27 6-30 0z" fill="#dfe1e2" stroke="#c4c8ca" />
        <path d="m12 14 6 28M39 14l-7 28M24 16l3 28" stroke="#e9ebeb" strokeWidth="4" />
        <ellipse cx="25" cy="5" rx="20" ry="5.500" fill="#c3c7c9" />
        <path d="m8 5 7-4 5 6 5-8 6 7 6-6 5 6-8 3H15z" fill="#55585c" />
        <path d="m17 4 6-2 2 5z" fill="#fff" />
        <path d="m27 6 4-4 3 4z" fill="#4fb9a5" />
        <path d="m35 5 3-3 3 4z" fill="#fff" />
      </>
    ),
  },
];

function DockItem({ item }: { item: Item }) {
  return (
    <button aria-label={item.name} className="relative flex min-h-0 flex-1 items-center pl-[17px]">
      {item.dot && <span className="absolute left-1 size-1.5 rounded-full bg-[#6e7273]" />}
      <Svg w={50} h={50} vb="0 0 50 50">{item.art}</Svg>
      {item.badge && (
        <span className="absolute top-0 right-[7px] flex h-[22px] min-w-[22px] items-center justify-center rounded-full bg-[#ea5547] px-[3px] text-[11px] leading-none text-white">
          {item.badge}
        </span>
      )}
    </button>
  );
}

function Dock() {
  return (
    <aside
      aria-label="Dock"
      className="absolute top-[85px] left-0 flex w-[79px] flex-col rounded-r-[12px] border border-l-0 border-[#c9cccd] bg-linear-to-b from-[#e5e6e9] via-[#f3f5f5] via-20% to-[#f3f5f5] pt-[7px] pb-[5px] shadow-[0_0_90px_rgba(0,0,0,0.22)]"
    >
      <div className="flex h-[891px] flex-col">
        {APPS.map((a) => (
          <DockItem key={a.name} item={a} />
        ))}
      </div>
      <hr className="mt-3.5 mb-3 ml-2.5 w-[58px] border-t-2 border-[#b4b8b9]" />
      <div className="flex h-[417px] flex-col">
        {RUNNING.map((a) => (
          <DockItem key={a.name} item={a} />
        ))}
      </div>
      <hr className="mt-[13px] mb-[9px] ml-2.5 w-[58px] border-t-2 border-[#b4b8b9]" />
      <div className="flex h-[299px] flex-col">
        {MINIMIZED.map((a) => (
          <DockItem key={a.name} item={a} />
        ))}
      </div>
    </aside>
  );
}

export default function App() {
  return (
    <div className="relative flex h-screen w-full flex-col overflow-hidden bg-[#071229] font-[Inter,sans-serif]">
      <MenuBar />
      <div className="flex min-h-0 flex-1 border-r-2 border-black bg-linear-to-b from-[#04102a] via-[#12203d] via-30% to-[#0a1420] pt-0.5 pr-2.5">
        <div className="flex min-w-0 flex-1 flex-col overflow-hidden rounded-r-[12px] bg-white">
          <TabStrip />
          <Toolbar />
          <BookmarksBar />
          <div className="flex min-h-0 flex-1">
            <Quiz />
            <div className="flex w-[30px] border-l-2 border-[#e7e7e7] bg-[#fafafa] pt-[82px] pb-1.5 pl-1.5">
              <div className="w-4 rounded-full bg-[#c1c1c1]" />
            </div>
          </div>
        </div>
      </div>
      <Dock />
    </div>
  );
}
